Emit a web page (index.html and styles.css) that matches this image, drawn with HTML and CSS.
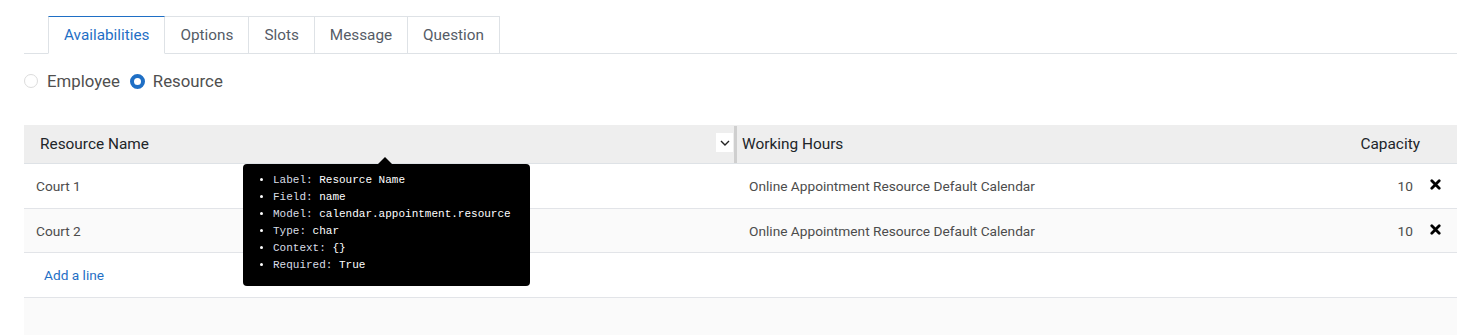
FILE: index.html
```
<!DOCTYPE html>
<html>
<head>
<meta charset="utf-8">
<link rel="stylesheet" href="styles.css">
</head>
<body>
<div class="page">
  <ul class="tabs">
    <li class="tab active">Availabilities</li>
    <li class="tab">Options</li>
    <li class="tab">Slots</li>
    <li class="tab">Message</li>
    <li class="tab">Question</li>
  </ul>
  <div class="radios">
    <label class="radio"><span class="dot"></span>Employee</label>
    <label class="radio"><span class="dot checked"></span>Resource</label>
  </div>
  <div class="table">
    <div class="thead">
      <div class="th name">Resource Name
        <span class="chev"><svg width="10" height="6" viewBox="0 0 10 6"><path d="M1 1 L5 5 L9 1" fill="none" stroke="#222" stroke-width="1.4"/></svg></span>
        <span class="grip"></span>
      </div>
      <div class="th hours">Working Hours</div>
      <div class="th cap">Capacity</div>
      <div class="th del"></div>
    </div>
    <div class="tr">
      <div class="td name">Court 1</div>
      <div class="td hours">Online Appointment Resource Default Calendar</div>
      <div class="td cap">10</div>
      <div class="td del"><svg width="11" height="11" viewBox="0 0 11 11"><path d="M1.8 1.8 L9.2 9.2 M9.2 1.8 L1.8 9.2" stroke="#000" stroke-width="2.8" stroke-linecap="round"/></svg></div>
    </div>
    <div class="tr odd">
      <div class="td name">Court 2</div>
      <div class="td hours">Online Appointment Resource Default Calendar</div>
      <div class="td cap">10</div>
      <div class="td del"><svg width="11" height="11" viewBox="0 0 11 11"><path d="M1.8 1.8 L9.2 9.2 M9.2 1.8 L1.8 9.2" stroke="#000" stroke-width="2.8" stroke-linecap="round"/></svg></div>
    </div>
    <div class="tr add">
      <div class="td addline">Add a line</div>
    </div>
    <div class="tfoot"></div>
    <div class="tooltip">
      <ul>
        <li><span class="k">Label:</span> Resource Name</li>
        <li><span class="k">Field:</span> name</li>
        <li><span class="k">Model:</span> calendar.appointment.resource</li>
        <li><span class="k">Type:</span> char</li>
        <li><span class="k">Context:</span> {}</li>
        <li><span class="k">Required:</span> True</li>
      </ul>
    </div>
  </div>
</div>
</body>
</html>
```

FILE: styles.css
```
* { box-sizing: border-box; }
html, body { margin: 0; background: #fff; }
body { font-family: Roboto, "Noto Sans", sans-serif; color: #4c4c4c; }
.page { padding: 16px 18px 0 24px; }

.tabs {
  list-style: none; margin: 0; padding: 0 0 0 24px;
  display: flex; border-bottom: 1px solid #dee2e6;
}
.tab {
  height: 38px; padding: 0 15px; margin-bottom: -1px;
  display: flex; align-items: center;
  font-size: 15.3px; color: #555b66;
  border: 1px solid #dee2e6; border-left: none; background: #fff;
}
.tab:first-child { border-left: 1px solid #dee2e6; }
.tab.active { color: #1f6fc5; border-top: 1px solid #1f6fc5; border-bottom-color: #fff; }

.radios { display: flex; gap: 10px; margin-top: 17px; height: 20px; align-items: center; }
.radio { display: flex; align-items: center; font-size: 16.8px; color: #4f4f4f; }
.dot {
  width: 14px; height: 14px; border-radius: 50%;
  border: 1px solid #dcdcdc; margin-right: 9px; background: #fff;
}
.dot.checked { border: 4px solid #1f6fc5; width: 15px; height: 15px; margin-right: 8px; }

.table { position: relative; margin-top: 34px; }
.thead {
  display: flex; background: #eeeeee; height: 39px;
  border-bottom: 1px solid #dee2e6; align-items: stretch;
}
.th { display: flex; align-items: center; font-size: 15.4px; color: #212529; }
.th.name { width: 713px; padding-left: 16px; position: relative; }
.chev {
  position: absolute; right: 4px; top: 8px; width: 17px; height: 19px;
  background: #fff; display: flex; align-items: center; justify-content: center;
}
.grip { position: absolute; right: 0; top: 1px; bottom: 0; width: 3px; background: #cfcfcf; }
.th.hours { flex: 1; padding-left: 5px; }
.th.cap { width: 120px; justify-content: flex-end; padding-right: 0; }
.th.del { width: 37px; }

.tr { display: flex; height: 45px; border-bottom: 1px solid #e2e4e8; align-items: center; }
.tr.odd { background: #fafafa; height: 44px; }
.tr.add { height: 45px; }
.td { font-size: 13.7px; color: #4c4c4c; }
.td.name { width: 713px; padding-left: 12px; }
.td.hours { flex: 1; padding-left: 12px; }
.td.cap { width: 120px; text-align: right; padding-right: 7px; }
.td.del { width: 37px; display: flex; padding-left: 10px; padding-bottom: 3px; }
.td.addline { padding-left: 20px; color: #1f6fc5; }
.tfoot { height: 40px; background: #fafafa; }

.tooltip {
  position: absolute; left: 219px; top: 39px; width: 287px; height: 122px;
  background: #000; border-radius: 4px; color: #fff;
  font-family: "Liberation Mono", monospace; font-size: 11px;
}
.tooltip::before {
  content: ""; position: absolute; top: -7px; left: 135px;
  border-left: 7px solid transparent; border-right: 7px solid transparent;
  border-bottom: 7px solid #000;
}
.tooltip ul { margin: 0; padding: 8px 0 0 30px; }
.tooltip li { line-height: 17px; }
.k { color: #d8dde6; letter-spacing: 0; }
```
